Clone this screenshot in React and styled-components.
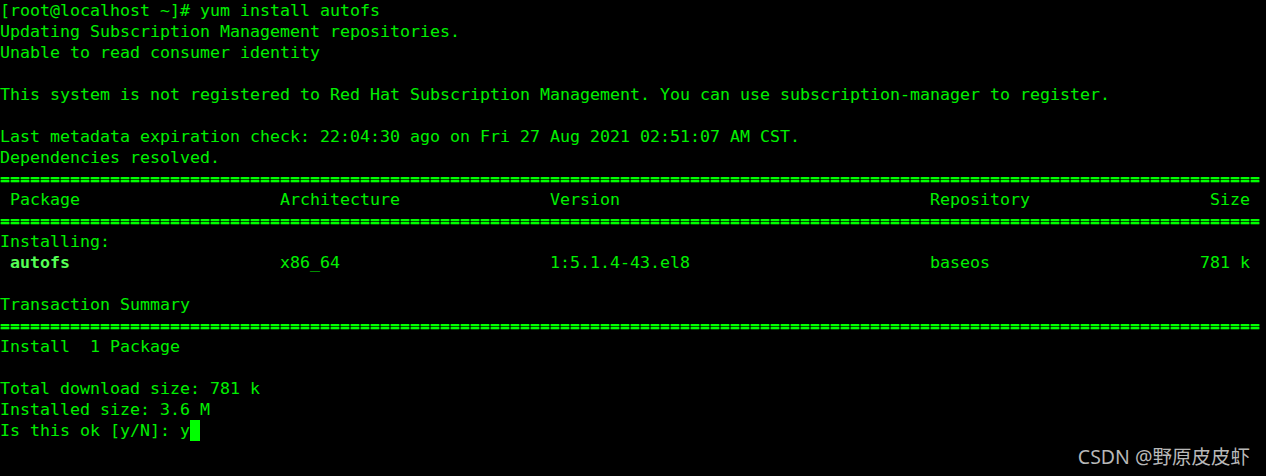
import React from "react";
import styled, { createGlobalStyle } from "styled-components";

const Global = createGlobalStyle`
  html, body { margin: 0; padding: 0; background: #000; }
  #root { height: 476px; }
`;

const Screen = styled.div`
  position: relative;
  width: 1266px;
  height: 476px;
  background: #000;
  overflow: hidden;
`;

const Terminal = styled.div`
  display: flex;
  flex-direction: column;
  font-family: "DejaVu Sans Mono", "Liberation Mono", monospace;
  font-size: 16.63px;
  color: #00f000;
`;

const Line = styled.div`
  height: 21px;
  line-height: 21px;
  white-space: pre;
`;

const Rule = styled(Line)`
  color: #00ff00;
  text-shadow: 0 0.5px 0 #00ff00;
`;

const Bold = styled.span`
  font-weight: bold;
  color: #55ff55;
`;

const Cursor = styled.span`
  display: inline-block;
  width: 10px;
  height: 21px;
  vertical-align: top;
  background: #00ff00;
`;

const Watermark = styled.div`
  position: absolute;
  right: 16px;
  bottom: 6px;
  font-family: "Noto Sans", "Noto Sans CJK SC", sans-serif;
  font-size: 19.5px;
  line-height: 26px;
  color: #b8b8b8;
`;

const pad = (s, n) => s + " ".repeat(Math.max(0, n - s.length));
const rule = "=".repeat(126);

export default function App() {
  const header =
    pad(" Package", 28) + pad("Architecture", 27) + pad("Version", 38) + pad("Repository", 28) + "Size";
  const rowRest = pad("", 21) + pad("x86_64", 27) + pad("1:5.1.4-43.el8", 38) + pad("baseos", 27) + "781 k";
  return (
    <Screen>
      <Global />
      <Terminal>
        <Line>[root@localhost ~]# yum install autofs</Line>
        <Line>Updating Subscription Management repositories.</Line>
        <Line>Unable to read consumer identity</Line>
        <Line> </Line>
        <Line>This system is not registered to Red Hat Subscription Management. You can use subscription-manager to register.</Line>
        <Line> </Line>
        <Line>Last metadata expiration check: 22:04:30 ago on Fri 27 Aug 2021 02:51:07 AM CST.</Line>
        <Line>Dependencies resolved.</Line>
        <Rule>{rule}</Rule>
        <Line>{header}</Line>
        <Rule>{rule}</Rule>
        <Line>Installing:</Line>
        <Line>
          {" "}
          <Bold>autofs</Bold>
          {rowRest}
        </Line>
        <Line> </Line>
        <Line>Transaction Summary</Line>
        <Rule>{rule}</Rule>
        <Line>Install  1 Package</Line>
        <Line> </Line>
        <Line>Total download size: 781 k</Line>
        <Line>Installed size: 3.6 M</Line>
        <Line>
          Is this ok [y/N]: y<Cursor />
        </Line>
      </Terminal>
      <Watermark>CSDN @野原皮皮虾</Watermark>
    </Screen>
  );
}
